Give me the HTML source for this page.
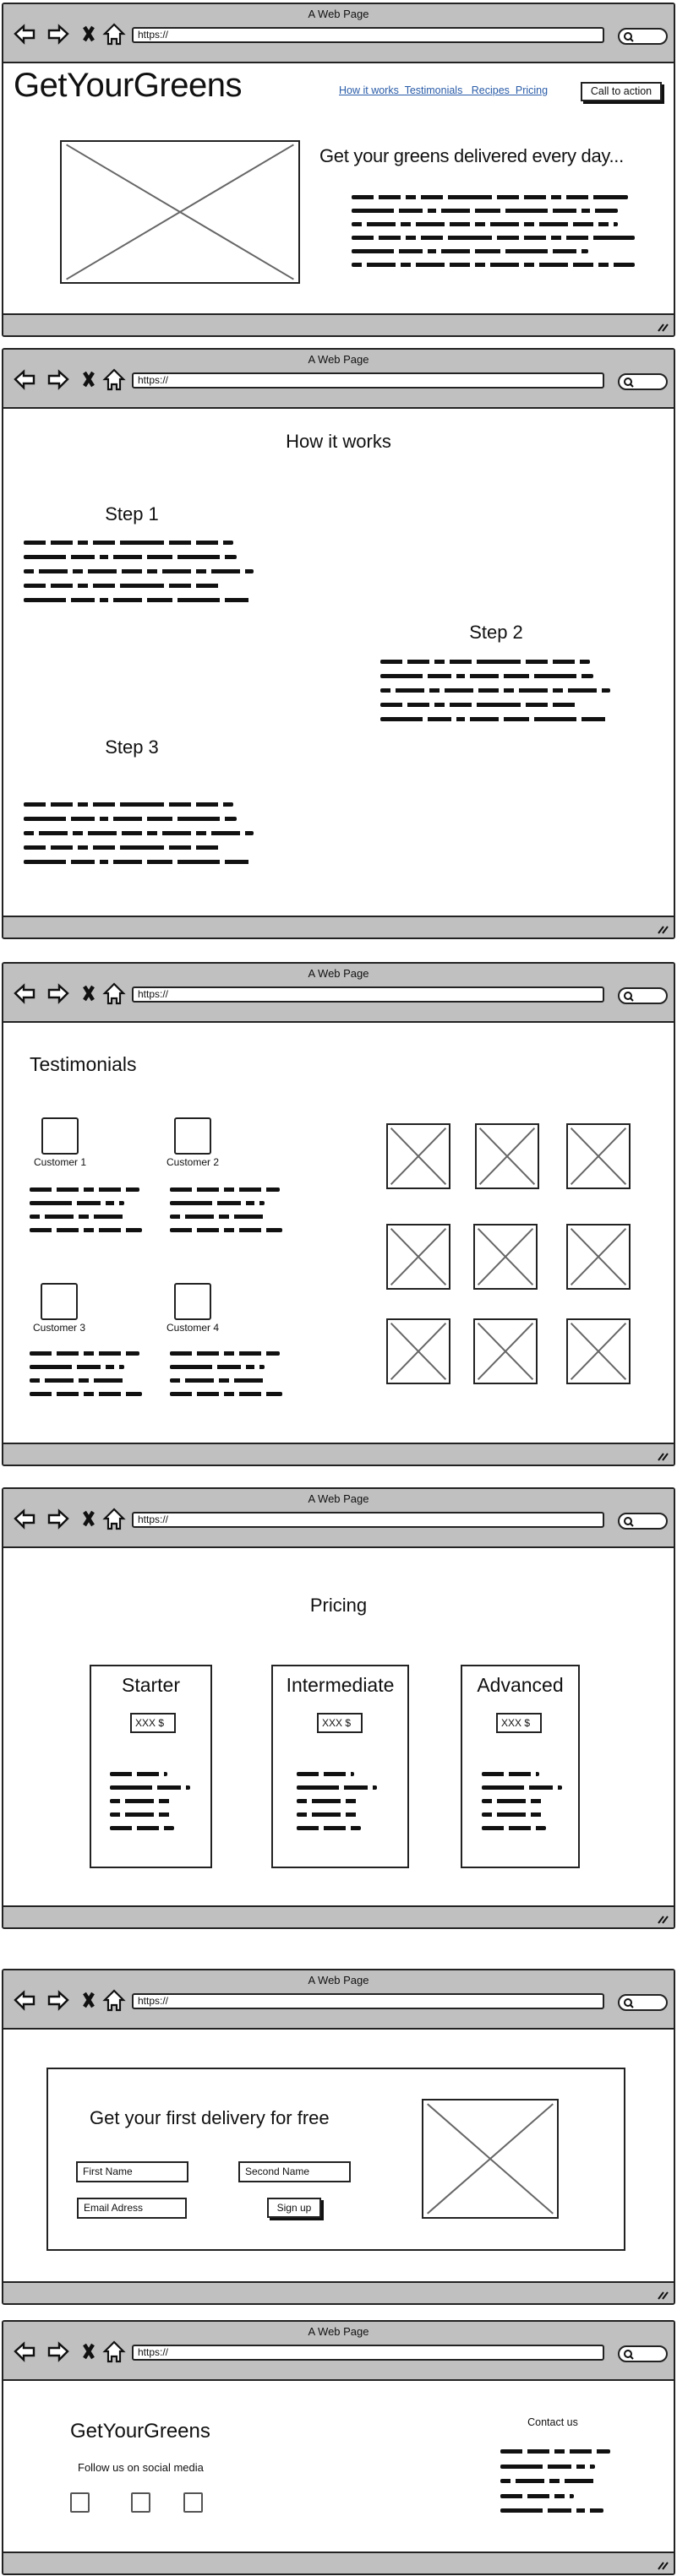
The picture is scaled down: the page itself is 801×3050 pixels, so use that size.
<!DOCTYPE html>
<html><head><meta charset="utf-8">
<style>
*{margin:0;padding:0;box-sizing:border-box}
body{width:801px;height:3050px;position:relative;background:#fff;font-family:"Liberation Sans",sans-serif;color:#111;overflow:hidden}
.a{position:absolute}
.fr{position:absolute;left:2px;width:797px;border:2px solid #222;border-radius:3px;background:#fff;overflow:hidden}
.tb{position:absolute;left:0;top:0;right:0;height:70px;background:#c0c0c0;border-bottom:2px solid #222}
.bb{position:absolute;left:0;bottom:0;right:0;height:26px;background:#c0c0c0;border-top:2px solid #222}
.ttl{position:absolute;left:0;right:0;top:4px;text-align:center;font-size:13px}
.url{position:absolute;left:152px;top:27px;width:559px;height:19px;background:#fff;border:2px solid #222;border-radius:3px;font-size:12px;padding-left:5px;line-height:15px}
.srch{position:absolute;left:727px;top:28px;width:59px;height:20px;background:#fff;border:2px solid #222;border-radius:10px}
.nav{position:absolute;left:12px;top:21px}
.rz{position:absolute;right:6px;bottom:4px}
.img{position:absolute;border:2px solid #222;background:#fff}
.img svg{position:absolute;left:0;top:0;width:100%;height:100%}
.sc{position:absolute;height:5px;border-radius:2px;background:repeating-linear-gradient(90deg,#111 0 26px,transparent 26px 32px,#111 32px 58px,transparent 58px 64px,#111 64px 76px,transparent 76px 82px,#111 82px 108px,transparent 108px 114px,#111 114px 166px,transparent 166px 172px)}
.sc.b{background:repeating-linear-gradient(90deg,#111 0 50px,transparent 50px 56px,#111 56px 84px,transparent 84px 90px,#111 90px 100px,transparent 100px 106px,#111 106px 140px,transparent 140px 146px,#111 146px 176px,transparent 176px 182px)}
.sc.c{background:repeating-linear-gradient(90deg,#111 0 12px,transparent 12px 18px,#111 18px 52px,transparent 52px 58px,#111 58px 70px,transparent 70px 76px,#111 76px 110px,transparent 110px 116px,#111 116px 140px,transparent 140px 146px)}
.t{position:absolute;white-space:nowrap}
.c{text-align:center}
.box{position:absolute;border:2px solid #222;background:#fff}
</style></head><body>

<!-- Frame 1 -->
<div class="fr" style="top:3px;height:396px">
 <div class="tb"><div class="ttl">A Web Page</div>
  <svg class="nav" width="135" height="30" viewBox="0 0 135 26"><polygon points="2,12 12,3 12,8 24,8 24,17 12,17 12,22" fill="#fff" stroke="#111" stroke-width="2.4"/><polygon points="64,12 54,3 54,8 42,8 42,17 54,17 54,22" fill="#fff" stroke="#111" stroke-width="2.4"/><path d="M84 4 L94 20 M94 4 L84 20" stroke="#111" stroke-width="4.5"/><polygon points="119,1 130,12 126,12 126,24 122,24 122,18 116,18 116,24 112,24 112,12 108,12" fill="#fff" stroke="#111" stroke-width="2.2"/></svg>
  <div class="url">https://</div><div class="srch"><svg width="14" height="14" style="position:absolute;left:4px;top:2px"><circle cx="6" cy="6" r="4" fill="none" stroke="#111" stroke-width="2"/><path d="M9 9 L12 12" stroke="#111" stroke-width="2"/></svg></div></div>
 <div class="bb"><svg class="rz" width="14" height="14"><path d="M2 13 L8 5 M7 13 L13 5" stroke="#111" stroke-width="2"/></svg></div>
</div>
<div class="t" style="left:16px;top:79px;font-size:40px;letter-spacing:-0.5px">GetYourGreens</div>
<div class="t" style="left:401px;top:100px;font-size:12.5px;color:#2a5ca8;text-decoration:underline">How it works&nbsp; Testimonials &nbsp; Recipes &nbsp;Pricing</div>
<div class="box" style="left:687px;top:97px;width:96px;height:23px;box-shadow:3px 3px 0 #111;font-size:12.5px;text-align:center;line-height:19px">Call to action</div>
<div class="img" style="left:71px;top:166px;width:284px;height:170px"><svg viewBox="0 0 100 100" preserveAspectRatio="none"><path d="M2 2 L98 98 M98 2 L2 98" stroke="#666" vector-effect="non-scaling-stroke" style="stroke-width:2"/></svg></div>
<div class="t" style="left:378px;top:172px;font-size:22px;letter-spacing:-0.3px">Get your greens delivered every day...</div>
<div class="sc" style="left:416px;top:231px;width:327px"></div>
<div class="sc b" style="left:416px;top:247px;width:315px"></div>
<div class="sc c" style="left:416px;top:263px;width:315px"></div>
<div class="sc" style="left:416px;top:279px;width:335px"></div>
<div class="sc b" style="left:416px;top:295px;width:280px"></div>
<div class="sc c" style="left:416px;top:311px;width:335px"></div>

<!-- Frame 2 -->
<div class="fr" style="top:412px;height:700px">
 <div class="tb"><div class="ttl">A Web Page</div>
  <svg class="nav" width="135" height="30" viewBox="0 0 135 26"><polygon points="2,12 12,3 12,8 24,8 24,17 12,17 12,22" fill="#fff" stroke="#111" stroke-width="2.4"/><polygon points="64,12 54,3 54,8 42,8 42,17 54,17 54,22" fill="#fff" stroke="#111" stroke-width="2.4"/><path d="M84 4 L94 20 M94 4 L84 20" stroke="#111" stroke-width="4.5"/><polygon points="119,1 130,12 126,12 126,24 122,24 122,18 116,18 116,24 112,24 112,12 108,12" fill="#fff" stroke="#111" stroke-width="2.2"/></svg>
  <div class="url">https://</div><div class="srch"><svg width="14" height="14" style="position:absolute;left:4px;top:2px"><circle cx="6" cy="6" r="4" fill="none" stroke="#111" stroke-width="2"/><path d="M9 9 L12 12" stroke="#111" stroke-width="2"/></svg></div></div>
 <div class="bb"><svg class="rz" width="14" height="14"><path d="M2 13 L8 5 M7 13 L13 5" stroke="#111" stroke-width="2"/></svg></div>
</div>
<div class="t c" style="left:0;width:801px;top:510px;font-size:22px">How it works</div>
<div class="t c" style="left:56px;width:200px;top:596px;font-size:22px">Step 1</div>
<div class="sc" style="left:28px;top:640px;width:248px"></div>
<div class="sc b" style="left:28px;top:657px;width:252px"></div>
<div class="sc c" style="left:28px;top:674px;width:272px"></div>
<div class="sc" style="left:28px;top:691px;width:232px"></div>
<div class="sc b" style="left:28px;top:708px;width:270px"></div>
<div class="t c" style="left:487px;width:200px;top:736px;font-size:22px">Step 2</div>
<div class="sc" style="left:450px;top:781px;width:248px"></div>
<div class="sc b" style="left:450px;top:798px;width:252px"></div>
<div class="sc c" style="left:450px;top:815px;width:272px"></div>
<div class="sc" style="left:450px;top:832px;width:232px"></div>
<div class="sc b" style="left:450px;top:849px;width:270px"></div>
<div class="t c" style="left:56px;width:200px;top:872px;font-size:22px">Step 3</div>
<div class="sc" style="left:28px;top:950px;width:248px"></div>
<div class="sc b" style="left:28px;top:967px;width:252px"></div>
<div class="sc c" style="left:28px;top:984px;width:272px"></div>
<div class="sc" style="left:28px;top:1001px;width:232px"></div>
<div class="sc b" style="left:28px;top:1018px;width:270px"></div>

<!-- Frame 3 -->
<div class="fr" style="top:1139px;height:597px">
 <div class="tb"><div class="ttl">A Web Page</div>
  <svg class="nav" width="135" height="30" viewBox="0 0 135 26"><polygon points="2,12 12,3 12,8 24,8 24,17 12,17 12,22" fill="#fff" stroke="#111" stroke-width="2.4"/><polygon points="64,12 54,3 54,8 42,8 42,17 54,17 54,22" fill="#fff" stroke="#111" stroke-width="2.4"/><path d="M84 4 L94 20 M94 4 L84 20" stroke="#111" stroke-width="4.5"/><polygon points="119,1 130,12 126,12 126,24 122,24 122,18 116,18 116,24 112,24 112,12 108,12" fill="#fff" stroke="#111" stroke-width="2.2"/></svg>
  <div class="url">https://</div><div class="srch"><svg width="14" height="14" style="position:absolute;left:4px;top:2px"><circle cx="6" cy="6" r="4" fill="none" stroke="#111" stroke-width="2"/><path d="M9 9 L12 12" stroke="#111" stroke-width="2"/></svg></div></div>
 <div class="bb"><svg class="rz" width="14" height="14"><path d="M2 13 L8 5 M7 13 L13 5" stroke="#111" stroke-width="2"/></svg></div>
</div>
<div class="t" style="left:35px;top:1247px;font-size:23px">Testimonials</div>
<div class="box" style="left:49px;top:1323px;width:44px;height:44px;border-radius:3px"></div>
<div class="box" style="left:206px;top:1323px;width:44px;height:44px;border-radius:3px"></div>
<div class="t c" style="left:21px;width:100px;top:1369px;font-size:12px">Customer 1</div>
<div class="t c" style="left:178px;width:100px;top:1369px;font-size:12px">Customer 2</div>
<div class="sc" style="left:35px;top:1406px;width:130px"></div><div class="sc b" style="left:35px;top:1422px;width:112px"></div><div class="sc c" style="left:35px;top:1438px;width:112px"></div><div class="sc" style="left:35px;top:1454px;width:133px"></div>
<div class="sc" style="left:201px;top:1406px;width:130px"></div><div class="sc b" style="left:201px;top:1422px;width:112px"></div><div class="sc c" style="left:201px;top:1438px;width:112px"></div><div class="sc" style="left:201px;top:1454px;width:133px"></div>
<div class="box" style="left:48px;top:1519px;width:44px;height:44px;border-radius:3px"></div>
<div class="box" style="left:206px;top:1519px;width:44px;height:44px;border-radius:3px"></div>
<div class="t c" style="left:20px;width:100px;top:1565px;font-size:12px">Customer 3</div>
<div class="t c" style="left:178px;width:100px;top:1565px;font-size:12px">Customer 4</div>
<div class="sc" style="left:35px;top:1600px;width:130px"></div><div class="sc b" style="left:35px;top:1616px;width:112px"></div><div class="sc c" style="left:35px;top:1632px;width:112px"></div><div class="sc" style="left:35px;top:1648px;width:133px"></div>
<div class="sc" style="left:201px;top:1600px;width:130px"></div><div class="sc b" style="left:201px;top:1616px;width:112px"></div><div class="sc c" style="left:201px;top:1632px;width:112px"></div><div class="sc" style="left:201px;top:1648px;width:133px"></div>
<div class="img" style="left:457px;top:1330px;width:76px;height:78px"><svg viewBox="0 0 100 100" preserveAspectRatio="none"><path d="M5 5 L95 95 M95 5 L5 95" stroke="#666" style="stroke-width:2" vector-effect="non-scaling-stroke"/></svg></div>
<div class="img" style="left:562px;top:1330px;width:76px;height:78px"><svg viewBox="0 0 100 100" preserveAspectRatio="none"><path d="M5 5 L95 95 M95 5 L5 95" stroke="#666" style="stroke-width:2" vector-effect="non-scaling-stroke"/></svg></div>
<div class="img" style="left:670px;top:1330px;width:76px;height:78px"><svg viewBox="0 0 100 100" preserveAspectRatio="none"><path d="M5 5 L95 95 M95 5 L5 95" stroke="#666" style="stroke-width:2" vector-effect="non-scaling-stroke"/></svg></div>
<div class="img" style="left:457px;top:1449px;width:76px;height:78px"><svg viewBox="0 0 100 100" preserveAspectRatio="none"><path d="M5 5 L95 95 M95 5 L5 95" stroke="#666" style="stroke-width:2" vector-effect="non-scaling-stroke"/></svg></div>
<div class="img" style="left:560px;top:1449px;width:76px;height:78px"><svg viewBox="0 0 100 100" preserveAspectRatio="none"><path d="M5 5 L95 95 M95 5 L5 95" stroke="#666" style="stroke-width:2" vector-effect="non-scaling-stroke"/></svg></div>
<div class="img" style="left:670px;top:1449px;width:76px;height:78px"><svg viewBox="0 0 100 100" preserveAspectRatio="none"><path d="M5 5 L95 95 M95 5 L5 95" stroke="#666" style="stroke-width:2" vector-effect="non-scaling-stroke"/></svg></div>
<div class="img" style="left:457px;top:1561px;width:76px;height:78px"><svg viewBox="0 0 100 100" preserveAspectRatio="none"><path d="M5 5 L95 95 M95 5 L5 95" stroke="#666" style="stroke-width:2" vector-effect="non-scaling-stroke"/></svg></div>
<div class="img" style="left:560px;top:1561px;width:76px;height:78px"><svg viewBox="0 0 100 100" preserveAspectRatio="none"><path d="M5 5 L95 95 M95 5 L5 95" stroke="#666" style="stroke-width:2" vector-effect="non-scaling-stroke"/></svg></div>
<div class="img" style="left:670px;top:1561px;width:76px;height:78px"><svg viewBox="0 0 100 100" preserveAspectRatio="none"><path d="M5 5 L95 95 M95 5 L5 95" stroke="#666" style="stroke-width:2" vector-effect="non-scaling-stroke"/></svg></div>

<!-- Frame 4 -->
<div class="fr" style="top:1761px;height:523px">
 <div class="tb"><div class="ttl">A Web Page</div>
  <svg class="nav" width="135" height="30" viewBox="0 0 135 26"><polygon points="2,12 12,3 12,8 24,8 24,17 12,17 12,22" fill="#fff" stroke="#111" stroke-width="2.4"/><polygon points="64,12 54,3 54,8 42,8 42,17 54,17 54,22" fill="#fff" stroke="#111" stroke-width="2.4"/><path d="M84 4 L94 20 M94 4 L84 20" stroke="#111" stroke-width="4.5"/><polygon points="119,1 130,12 126,12 126,24 122,24 122,18 116,18 116,24 112,24 112,12 108,12" fill="#fff" stroke="#111" stroke-width="2.2"/></svg>
  <div class="url">https://</div><div class="srch"><svg width="14" height="14" style="position:absolute;left:4px;top:2px"><circle cx="6" cy="6" r="4" fill="none" stroke="#111" stroke-width="2"/><path d="M9 9 L12 12" stroke="#111" stroke-width="2"/></svg></div></div>
 <div class="bb"><svg class="rz" width="14" height="14"><path d="M2 13 L8 5 M7 13 L13 5" stroke="#111" stroke-width="2"/></svg></div>
</div>
<div class="t c" style="left:0;width:801px;top:1888px;font-size:22px">Pricing</div>
<div class="box" style="left:106px;top:1971px;width:145px;height:241px"></div>
<div class="box" style="left:321px;top:1971px;width:163px;height:241px"></div>
<div class="box" style="left:545px;top:1971px;width:141px;height:241px"></div>
<div class="t c" style="left:106px;width:145px;top:1982px;font-size:23px">Starter</div>
<div class="t c" style="left:321px;width:163px;top:1982px;font-size:23px">Intermediate</div>
<div class="t c" style="left:545px;width:141px;top:1982px;font-size:23px">Advanced</div>
<div class="box" style="left:154px;top:2028px;width:54px;height:24px;font-size:12px;line-height:20px;padding-left:4px">XXX $</div>
<div class="box" style="left:375px;top:2028px;width:54px;height:24px;font-size:12px;line-height:20px;padding-left:4px">XXX $</div>
<div class="box" style="left:587px;top:2028px;width:54px;height:24px;font-size:12px;line-height:20px;padding-left:4px">XXX $</div>
<div class="sc" style="left:130px;top:2098px;width:68px"></div><div class="sc b" style="left:130px;top:2114px;width:95px"></div><div class="sc c" style="left:130px;top:2130px;width:76px"></div><div class="sc c" style="left:130px;top:2146px;width:76px"></div><div class="sc" style="left:130px;top:2162px;width:76px"></div>
<div class="sc" style="left:351px;top:2098px;width:68px"></div><div class="sc b" style="left:351px;top:2114px;width:95px"></div><div class="sc c" style="left:351px;top:2130px;width:76px"></div><div class="sc c" style="left:351px;top:2146px;width:76px"></div><div class="sc" style="left:351px;top:2162px;width:76px"></div>
<div class="sc" style="left:570px;top:2098px;width:68px"></div><div class="sc b" style="left:570px;top:2114px;width:95px"></div><div class="sc c" style="left:570px;top:2130px;width:76px"></div><div class="sc c" style="left:570px;top:2146px;width:76px"></div><div class="sc" style="left:570px;top:2162px;width:76px"></div>

<!-- Frame 5 -->
<div class="fr" style="top:2331px;height:398px">
 <div class="tb"><div class="ttl">A Web Page</div>
  <svg class="nav" width="135" height="30" viewBox="0 0 135 26"><polygon points="2,12 12,3 12,8 24,8 24,17 12,17 12,22" fill="#fff" stroke="#111" stroke-width="2.4"/><polygon points="64,12 54,3 54,8 42,8 42,17 54,17 54,22" fill="#fff" stroke="#111" stroke-width="2.4"/><path d="M84 4 L94 20 M94 4 L84 20" stroke="#111" stroke-width="4.5"/><polygon points="119,1 130,12 126,12 126,24 122,24 122,18 116,18 116,24 112,24 112,12 108,12" fill="#fff" stroke="#111" stroke-width="2.2"/></svg>
  <div class="url">https://</div><div class="srch"><svg width="14" height="14" style="position:absolute;left:4px;top:2px"><circle cx="6" cy="6" r="4" fill="none" stroke="#111" stroke-width="2"/><path d="M9 9 L12 12" stroke="#111" stroke-width="2"/></svg></div></div>
 <div class="bb"><svg class="rz" width="14" height="14"><path d="M2 13 L8 5 M7 13 L13 5" stroke="#111" stroke-width="2"/></svg></div>
</div>
<div class="box" style="left:55px;top:2448px;width:685px;height:217px"></div>
<div class="t" style="left:106px;top:2495px;font-size:22px">Get your first delivery for free</div>
<div class="box" style="left:90px;top:2559px;width:133px;height:25px;font-size:12px;line-height:21px;padding-left:6px">First Name</div>
<div class="box" style="left:282px;top:2559px;width:133px;height:25px;font-size:12px;line-height:21px;padding-left:6px">Second Name</div>
<div class="box" style="left:91px;top:2602px;width:130px;height:25px;font-size:12px;line-height:21px;padding-left:6px">Email Adress</div>
<div class="box" style="left:316px;top:2602px;width:64px;height:24px;font-size:12px;line-height:20px;text-align:center;box-shadow:3px 3px 0 #111">Sign up</div>
<div class="img" style="left:499px;top:2485px;width:162px;height:142px"><svg viewBox="0 0 100 100" preserveAspectRatio="none"><path d="M3 3 L97 97 M97 3 L3 97" stroke="#666" style="stroke-width:2" vector-effect="non-scaling-stroke"/></svg></div>

<!-- Frame 6 -->
<div class="fr" style="top:2747px;height:302px">
 <div class="tb"><div class="ttl">A Web Page</div>
  <svg class="nav" width="135" height="30" viewBox="0 0 135 26"><polygon points="2,12 12,3 12,8 24,8 24,17 12,17 12,22" fill="#fff" stroke="#111" stroke-width="2.4"/><polygon points="64,12 54,3 54,8 42,8 42,17 54,17 54,22" fill="#fff" stroke="#111" stroke-width="2.4"/><path d="M84 4 L94 20 M94 4 L84 20" stroke="#111" stroke-width="4.5"/><polygon points="119,1 130,12 126,12 126,24 122,24 122,18 116,18 116,24 112,24 112,12 108,12" fill="#fff" stroke="#111" stroke-width="2.2"/></svg>
  <div class="url">https://</div><div class="srch"><svg width="14" height="14" style="position:absolute;left:4px;top:2px"><circle cx="6" cy="6" r="4" fill="none" stroke="#111" stroke-width="2"/><path d="M9 9 L12 12" stroke="#111" stroke-width="2"/></svg></div></div>
 <div class="bb"><svg class="rz" width="14" height="14"><path d="M2 13 L8 5 M7 13 L13 5" stroke="#111" stroke-width="2"/></svg></div>
</div>
<div class="t" style="left:83px;top:2865px;font-size:24px">GetYourGreens</div>
<div class="t" style="left:92px;top:2914px;font-size:13px">Follow us on social media</div>
<div class="box" style="left:83px;top:2951px;width:23px;height:24px;border-color:#555;border-radius:2px"></div>
<div class="box" style="left:155px;top:2951px;width:23px;height:24px;border-color:#555;border-radius:2px"></div>
<div class="box" style="left:217px;top:2951px;width:23px;height:24px;border-color:#555;border-radius:2px"></div>
<div class="t c" style="left:594px;width:120px;top:2861px;font-size:12.5px">Contact us</div>
<div class="sc" style="left:592px;top:2900px;width:130px"></div>
<div class="sc b" style="left:592px;top:2918px;width:112px"></div>
<div class="sc c" style="left:592px;top:2935px;width:112px"></div>
<div class="sc" style="left:592px;top:2953px;width:87px"></div>
<div class="sc b" style="left:592px;top:2970px;width:122px"></div>
</body></html>
